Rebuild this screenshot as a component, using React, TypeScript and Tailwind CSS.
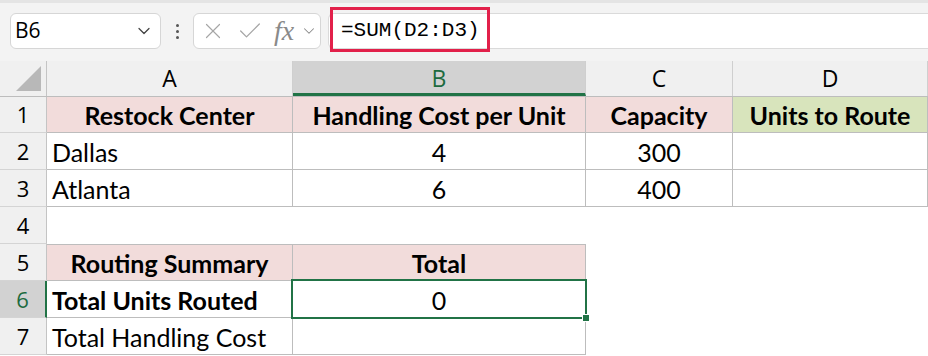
import { ChevronDown, X, Check } from 'lucide-react';

const cellFont = { fontFamily: 'Lato, "Open Sans", sans-serif' };

const cols = ['A', 'B', 'C', 'D'];

const RowHeader = ({ n, active = false, h }: { n: number; active?: boolean; h: string }) => (
    <div
        className={`w-[47px] shrink-0 flex items-center justify-center text-[22px] border-b border-[#d4d4d4] ${h} ${active
            ? 'bg-[#d2d2d2] text-[#1d6b3f] border-r-2 border-r-[#217346]'
            : 'bg-[#f0f0f0] text-black border-r border-r-[#c4c4c4]'
            }`}
        style={{ fontFamily: '"Open Sans", sans-serif' }}
    >
        {n}
    </div>
);

type CellProps = {
    w: string;
    children?: React.ReactNode;
    bold?: boolean;
    align?: 'left' | 'center';
    fill?: string;
    border?: boolean;
};

const Cell = ({ w, children, bold, align = 'center', fill = '', border = true }: CellProps) => (
    <div
        className={`${w} h-full flex items-center pt-[3px] text-[25px] text-black ${fill} ${bold ? 'font-bold' : ''} ${align === 'center' ? 'justify-center' : 'justify-start pl-[5px]'} ${border ? 'border-r border-b border-[#bdbdbd]' : ''}`}
        style={cellFont}
    >
        {children}
    </div>
);

export default function App() {
    return (
        <div className="w-[928px] h-[356px] overflow-hidden bg-white relative">
            {/* formula bar */}
            <div className="h-[61px] bg-[#f3f3f3] border-t-[3px] border-[#e4e4e4] flex items-start pt-[10px] pl-[10px] relative">
                <div className="w-[151px] h-[36px] bg-white rounded-md border border-[#d6d6d6] flex items-center justify-between pl-[4px] pr-[6px]">
                    <span className="text-[21px] text-black" style={{ fontFamily: '"Open Sans", sans-serif' }}>B6</span>
                    <ChevronDown size={20} strokeWidth={1.5} className="text-[#444]" />
                </div>
                <div className="w-[32px] h-[36px] flex flex-col items-center justify-center gap-[3px]">
                    <span className="w-[3px] h-[3px] rounded-full bg-[#555]" />
                    <span className="w-[3px] h-[3px] rounded-full bg-[#555]" />
                    <span className="w-[3px] h-[3px] rounded-full bg-[#555]" />
                </div>
                <div className="w-[128px] h-[36px] bg-white rounded-md border border-[#d6d6d6] flex items-center pl-[6px] gap-[10px]">
                    <X size={26} strokeWidth={1.1} className="text-[#a6a6a6]" />
                    <Check size={28} strokeWidth={1.1} className="text-[#a6a6a6]" />
                    <div className="flex items-center gap-[6px]">
                        <span className="text-[28px] italic text-[#8a8a8a] leading-none" style={{ fontFamily: '"Liberation Serif", serif' }}>fx</span>
                        <ChevronDown size={18} strokeWidth={1.4} className="text-[#8a8a8a]" />
                    </div>
                </div>
                <div className="ml-[7px] flex-1 h-[36px] bg-white border-y border-l border-[#dadada] rounded-l-md flex items-center pl-[12px]">
                    <span className="text-[21px] text-black" style={{ fontFamily: '"Liberation Mono", monospace' }}>=SUM(D2:D3)</span>
                </div>
                <div className="absolute left-[330px] top-[4px] w-[160px] h-[45px] border-[3px] border-[#e2204a]" />
            </div>

            {/* column headers */}
            <div className="h-[36px] flex bg-[#f0f0f0] border-b border-[#bdbdbd]" style={{ fontFamily: '"Open Sans", sans-serif' }}>
                <div className="w-[47px] shrink-0 border-r border-[#c4c4c4] relative">
                    <svg width="26" height="26" viewBox="0 0 26 26" className="absolute left-[16px] top-[5px]">
                        <polygon points="25,0 25,25 0,25" fill="#b8b8b8" />
                    </svg>
                </div>
                {cols.map((c) => {
                    const w = c === 'A' ? 'w-[246px]' : c === 'B' ? 'w-[293px]' : c === 'C' ? 'w-[147px]' : 'flex-1';
                    const active = c === 'B';
                    return (
                        <div
                            key={c}
                            className={`${w} h-full flex items-center justify-center text-[23px] border-r border-[#cfcfcf] ${active ? 'bg-[#d2d2d2] text-[#1d6b3f] border-b-[3px] border-b-[#217346] pt-[3px]' : 'text-black'}`}
                        >
                            {c}
                        </div>
                    );
                })}
            </div>

            {/* row 1 */}
            <div className="h-[36px] flex">
                <RowHeader n={1} h="h-full" />
                <Cell w="w-[246px]" bold fill="bg-[#f2dcdb]">Restock Center</Cell>
                <Cell w="w-[293px]" bold fill="bg-[#f2dcdb]">Handling Cost per Unit</Cell>
                <Cell w="w-[147px]" bold fill="bg-[#f2dcdb]">Capacity</Cell>
                <Cell w="flex-1" bold fill="bg-[#d8e4bc]">Units to Route</Cell>
            </div>
            {/* row 2 */}
            <div className="h-[37px] flex">
                <RowHeader n={2} h="h-full" />
                <Cell w="w-[246px]" align="left">Dallas</Cell>
                <Cell w="w-[293px]">4</Cell>
                <Cell w="w-[147px]">300</Cell>
                <Cell w="flex-1" />
            </div>
            {/* row 3 */}
            <div className="h-[37px] flex">
                <RowHeader n={3} h="h-full" />
                <Cell w="w-[246px]" align="left">Atlanta</Cell>
                <Cell w="w-[293px]">6</Cell>
                <Cell w="w-[147px]">400</Cell>
                <Cell w="flex-1" />
            </div>
            {/* row 4 */}
            <div className="h-[37px] flex">
                <RowHeader n={4} h="h-full" />
                <div className="flex-1" />
            </div>
            {/* row 5 */}
            <div className="h-[37px] flex">
                <RowHeader n={5} h="h-full" />
                <div className="w-[539px] flex border-t border-[#bdbdbd]">
                    <Cell w="w-[246px]" bold fill="bg-[#f2dcdb]">Routing Summary</Cell>
                    <Cell w="w-[293px]" bold fill="bg-[#f2dcdb]">Total</Cell>
                </div>
            </div>
            {/* row 6 */}
            <div className="h-[37px] flex">
                <RowHeader n={6} active h="h-full" />
                <Cell w="w-[246px]" bold align="left">Total Units Routed</Cell>
                <div className="w-[293px] h-full relative border-r border-b border-[#bdbdbd]">
                    <div className="h-full flex items-center justify-center pt-[3px] text-[25px] text-black" style={cellFont}>0</div>
                    <div className="absolute left-[-2px] top-[-2px] right-[-2px] bottom-[-2px] border-2 border-[#217346]" />
                    <div className="absolute right-[-5px] bottom-[-5px] w-[8px] h-[8px] bg-[#217346] border border-white" />
                </div>
            </div>
            {/* row 7 */}
            <div className="h-[37px] flex">
                <RowHeader n={7} h="h-full" />
                <Cell w="w-[246px]" align="left">Total Handling Cost</Cell>
                <Cell w="w-[293px]" />
            </div>
        </div>
    );
}
